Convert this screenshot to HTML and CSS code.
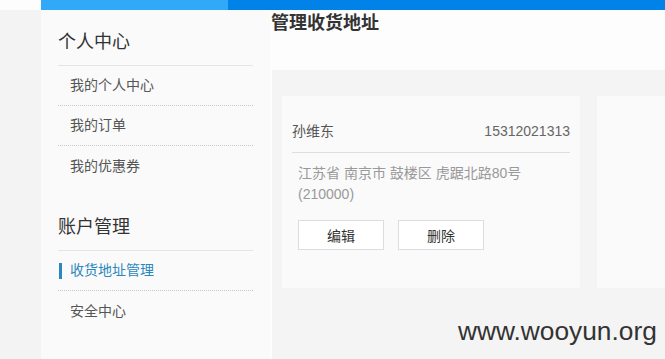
FILE: index.html
```html
<!DOCTYPE html>
<html lang="zh">
<head>
<meta charset="utf-8">
<link rel="stylesheet" href="styles.css">
</head>
<body>
<div class="topbar">
  <div class="top-gap"></div>
  <div class="top-a"></div>
  <div class="top-b"></div>
</div>
<div class="page">
  <div class="gutter"></div>
  <aside class="sidebar">
    <div class="section">
      <h3 class="sec-title">个人中心</h3>
      <ul class="menu">
        <li class="item">我的个人中心</li>
        <li class="item">我的订单</li>
        <li class="item last">我的优惠券</li>
      </ul>
    </div>
    <div class="section second">
      <h3 class="sec-title">账户管理</h3>
      <ul class="menu">
        <li class="item active">收货地址管理</li>
        <li class="item last">安全中心</li>
      </ul>
    </div>
  </aside>
  <main class="main">
    <h2 class="title">管理收货地址</h2>
    <div class="panel">
      <div class="card">
        <div class="card-head">
          <span class="name">孙维东</span>
          <span class="phone">15312021313</span>
        </div>
        <div class="addr">江苏省 南京市 鼓楼区 虎踞北路80号<br>(210000)</div>
        <div class="actions">
          <button class="btn">编辑</button>
          <button class="btn">删除</button>
        </div>
      </div>
      <div class="card card-empty"></div>
    </div>
  </main>
</div>
<div class="watermark">www.wooyun.org</div>
</body>
</html>
```
FILE: styles.css
```css
html, body {
  margin: 0;
  padding: 0;
}
body {
  width: 665px;
  height: 359px;
  overflow: hidden;
  background: #f3f3f3;
  font-family: "Liberation Sans", "Noto Sans CJK SC", sans-serif;
  position: relative;
}
.topbar {
  display: flex;
  height: 10px;
}
.top-gap {
  width: 41px;
  background: #fdfdfd;
}
.top-a {
  width: 187px;
  background: #30aaf8;
}
.top-b {
  flex: 1;
  background: #0082e8;
}
.page {
  display: flex;
  height: 349px;
  overflow: hidden;
}
.gutter {
  width: 41px;
  flex: none;
  background: #f3f3f3;
}
.sidebar {
  width: 195px;
  flex: none;
  background: #fafafa;
  padding: 0 17px;
}
.section.second {
  margin-top: 9px;
}
.sec-title {
  margin: 0;
  padding: 20px 0 10px;
  line-height: 25px;
  font-size: 18px;
  font-weight: normal;
  color: #333;
  border-bottom: 1px solid #e5e5e5;
}
.menu {
  list-style: none;
  margin: 0;
  padding: 0;
}
.item {
  position: relative;
  line-height: 39px;
  padding-left: 12px;
  font-size: 14px;
  color: #555;
  border-bottom: 1px dotted #c8c8c8;
}
.item.last {
  border-bottom: none;
  line-height: 40px;
}
.item.active {
  color: #2a88bf;
}
.item.active::before {
  content: "";
  position: absolute;
  left: 1px;
  top: 12px;
  width: 3px;
  height: 16px;
  background: #2a88bf;
}
.main {
  flex: 1;
  background: #fdfdfd;
  min-width: 0;
  overflow: hidden;
}
.title {
  margin: 0;
  padding: 1px 0 0 1px;
  line-height: 25px;
  height: 59px;
  font-size: 18px;
  font-weight: bold;
  color: #333;
}
.panel {
  display: flex;
  gap: 17px;
  margin-left: 2px;
  padding: 26px 0 0 10px;
  height: 263px;
  background: #f4f4f4;
  overflow: hidden;
}
.card {
  width: 278px;
  height: 192px;
  flex: none;
  padding: 0 10px;
  background: #fafafa;
}
.card-empty {
  width: 58px;
  padding-right: 0;
}
.card-head {
  display: flex;
  justify-content: space-between;
  padding: 24px 0 10px;
  line-height: 22px;
  font-size: 14px;
  border-bottom: 1px solid #dedede;
}
.name {
  color: #555;
}
.phone {
  color: #666;
}
.addr {
  padding: 10px 0 0 6px;
  line-height: 21px;
  font-size: 14px;
  color: #999;
}
.actions {
  display: flex;
  gap: 14px;
  padding: 15px 0 0 6px;
}
.btn {
  width: 86px;
  height: 30px;
  margin: 0;
  padding: 0;
  background: #fff;
  border: 1px solid #dddddd;
  font-family: "Liberation Sans", "Noto Sans CJK SC", sans-serif;
  font-size: 14px;
  color: #333;
}
.watermark {
  position: absolute;
  left: 458px;
  top: 315px;
  font-family: "Liberation Sans", sans-serif;
  font-size: 26.3px;
  line-height: 32px;
  color: #333;
}
```
